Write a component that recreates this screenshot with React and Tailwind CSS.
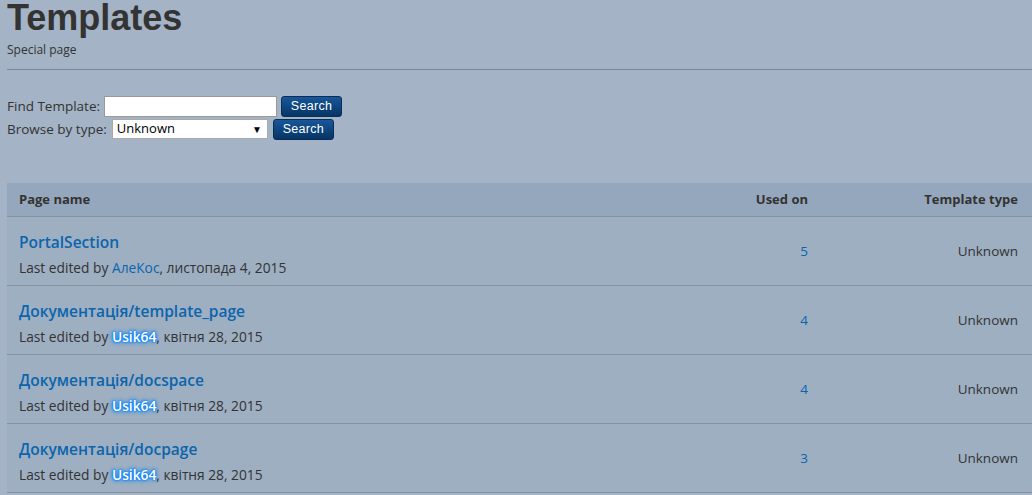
import React from "react";

const rows = [
  { name: "PortalSection", user: "АлеКос", hl: false, date: "листопада 4, 2015", used: "5" },
  { name: "Документація/template_page", user: "Usik64", hl: true, date: "квітня 28, 2015", used: "4" },
  { name: "Документація/docspace", user: "Usik64", hl: true, date: "квітня 28, 2015", used: "4" },
  { name: "Документація/docpage", user: "Usik64", hl: true, date: "квітня 28, 2015", used: "3" },
];

const ui = { fontFamily: '"Open Sans", "Noto Sans", sans-serif' };

function Btn({ children }) {
  return (
    <button
      className="h-[21px] w-[61px] rounded-[3px] border border-[#0a2d57] bg-gradient-to-b from-[#18579a] to-[#063564] text-[12.5px] leading-none tracking-[0.3px] text-white"
      style={{ fontFamily: '"Liberation Sans", Arial, sans-serif' }}
    >
      {children}
    </button>
  );
}

export default function App() {
  return (
    <div className="h-[495px] w-[1032px] overflow-hidden bg-[#a4b3c5] pl-[7px] text-[#333]" style={ui}>
      <h1
        className="-mt-[2px] text-[36px] font-bold leading-[40px] text-[#333]"
        style={{ fontFamily: '"Liberation Sans", Arial, sans-serif' }}
      >
        Templates
      </h1>
      <div className="mt-[4px] text-[12px] leading-[16px]">Special page</div>
      <div className="mt-[11px] h-px bg-[#7b899b]" />
      <div className="mt-[25px] flex flex-col gap-[1px] text-[13.5px]">
        <div className="flex h-[22px] items-center">
          <span className="mr-[4px]">Find Template:</span>
          <input className="h-[21px] w-[173px] border border-[#999] bg-white" />
          <span className="ml-[4px]"><Btn>Search</Btn></span>
        </div>
        <div className="flex h-[22px] items-center">
          <span className="mr-[5px]">Browse by type:</span>
          <div className="flex h-[20px] w-[156px] items-center justify-between border border-[#aaa] bg-white pl-[4px] pr-[5px] text-[13px] text-black">
            <span>Unknown</span>
            <span className="text-[10px]">▼</span>
          </div>
          <span className="ml-[5px]"><Btn>Search</Btn></span>
        </div>
      </div>
      <div className="mt-[43px]">
        <div className="flex h-[34px] items-center border-b border-[#8592a4] bg-[#95a7bc] text-[13px] font-bold text-[#333]">
          <div className="flex-1 pl-[12px]">Page name</div>
          <div className="w-[110px] text-right">Used on</div>
          <div className="w-[224px] pr-[14px] text-right">Template type</div>
        </div>
        {rows.map((r) => (
          <div key={r.name} className="flex h-[69px] items-center border-b border-[#8592a4] bg-[#9eafc2]">
            <div className="flex-1 pl-[12px] pt-[6px]">
              <div className="text-[15.5px] font-semibold leading-[22px] text-[#0b65ad]">{r.name}</div>
              <div className="mt-[6px] text-[13.75px] leading-[18px] text-[#333]">
                Last edited by{" "}
                {r.hl ? (
                  <span
                    className="font-semibold text-white"
                    style={{ textShadow: "0 0 1px #0a7cff, 0 0 2px #0a7cff, 0 0 3px #0a8cff, 0 0 4px #1e90ff, 0 0 5px #1e90ff" }}
                  >
                    {r.user}
                  </span>
                ) : (
                  <span className="text-[#0b65ad]">{r.user}</span>
                )}
                , {r.date}
              </div>
            </div>
            <div className="w-[110px] text-right text-[13.5px] text-[#0b65ad]">{r.used}</div>
            <div className="w-[224px] pr-[14px] text-right text-[13.5px] text-[#333]">Unknown</div>
          </div>
        ))}
      </div>
    </div>
  );
}
